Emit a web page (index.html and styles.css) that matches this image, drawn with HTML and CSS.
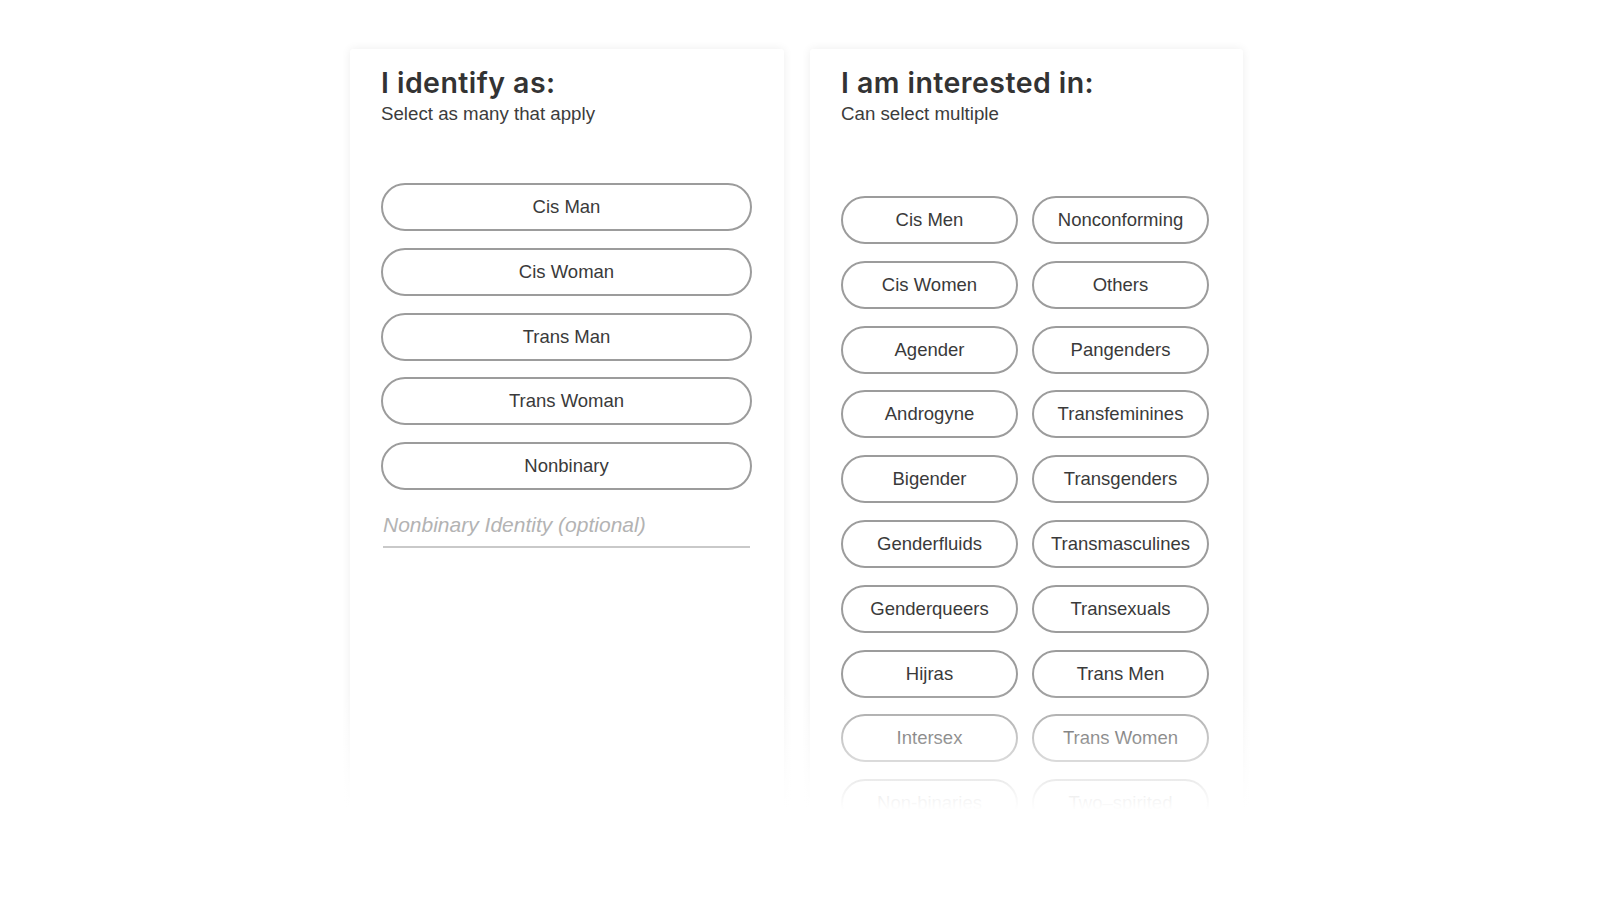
FILE: index.html
```html
<!DOCTYPE html>
<html lang="en">
<head>
<meta charset="utf-8">
<title>Identity preferences</title>
<link rel="stylesheet" href="styles.css">
</head>
<body>
<main class="stage">
  <section class="card card-identity">
    <h1 class="title">I identify as:</h1>
    <p class="subtitle">Select as many that apply</p>
    <div class="list">
      <button class="pill">Cis Man</button>
      <button class="pill">Cis Woman</button>
      <button class="pill">Trans Man</button>
      <button class="pill">Trans Woman</button>
      <button class="pill">Nonbinary</button>
    </div>
    <input class="field" type="text" placeholder="Nonbinary Identity (optional)">
  </section>
  <section class="card card-interest">
    <h1 class="title">I am interested in:</h1>
    <p class="subtitle">Can select multiple</p>
    <div class="grid">
      <button class="pill">Cis Men</button>
      <button class="pill">Nonconforming</button>
      <button class="pill">Cis Women</button>
      <button class="pill">Others</button>
      <button class="pill">Agender</button>
      <button class="pill">Pangenders</button>
      <button class="pill">Androgyne</button>
      <button class="pill">Transfeminines</button>
      <button class="pill">Bigender</button>
      <button class="pill">Transgenders</button>
      <button class="pill">Genderfluids</button>
      <button class="pill">Transmasculines</button>
      <button class="pill">Genderqueers</button>
      <button class="pill">Transexuals</button>
      <button class="pill">Hijras</button>
      <button class="pill">Trans Men</button>
      <button class="pill">Intersex</button>
      <button class="pill">Trans Women</button>
      <button class="pill">Non-binaries</button>
      <button class="pill">Two&ndash;spirited</button>
    </div>
  </section>
  <div class="fade"></div>
</main>
</body>
</html>
```

FILE: styles.css
```css
html, body {
  margin: 0;
  padding: 0;
  background: #ffffff;
}

body {
  font-family: "Liberation Sans", Arial, sans-serif;
  color: #333333;
}

.stage {
  position: relative;
  display: flex;
  align-items: flex-start;
  gap: 26px;
  padding: 49px 0 0 350px;
  height: 810px;
  box-sizing: border-box;
  overflow: hidden;
}

.card {
  width: 434px;
  min-height: 900px;
  box-sizing: border-box;
  background: #ffffff;
  border-radius: 3px;
  box-shadow: 0 0 10px rgba(0, 0, 0, 0.075);
  padding: 17px 32px 0 31px;
}

.card-interest {
  width: 433px;
  padding-right: 34px;
}

.title {
  margin: 0;
  font-family: Inter, "Noto Sans", sans-serif;
  font-weight: 600;
  font-size: 28.5px;
  line-height: 34px;
  letter-spacing: 0.45px;
  color: #333333;
}

.subtitle {
  margin: 3px 0 0;
  font-size: 18.7px;
  line-height: 22px;
  color: #3c3c3c;
}

.list {
  display: flex;
  flex-direction: column;
  gap: 16.8px;
  margin-top: 58px;
}

.grid {
  display: grid;
  grid-template-columns: 1fr 1fr;
  column-gap: 14px;
  row-gap: 16.8px;
  margin-top: 71px;
}

.pill {
  display: block;
  width: 100%;
  height: 48px;
  box-sizing: border-box;
  margin: 0;
  padding: 0 8px;
  border: 2px solid #9c9c9c;
  border-radius: 24px;
  background: #ffffff;
  font-family: "Liberation Sans", Arial, sans-serif;
  font-size: 18.5px;
  color: #3a3a3a;
  text-align: center;
  white-space: nowrap;
}

.field {
  display: block;
  width: calc(100% - 4px);
  margin: 19px 2px 0;
  height: 39px;
  box-sizing: border-box;
  padding: 0 0 5px;
  border: 0;
  border-bottom: 2px solid #c9c9c9;
  outline: none;
  background: transparent;
  font-family: "Liberation Sans", Arial, sans-serif;
  font-style: italic;
  font-size: 21px;
  line-height: 26px;
  color: #555555;
}

.field::placeholder {
  color: #b3b3b3;
}

.fade {
  position: absolute;
  left: 0;
  right: 0;
  bottom: 0;
  height: 122px;
  background: linear-gradient(to bottom, rgba(255, 255, 255, 0) 0%, rgba(255, 255, 255, 0.9) 85%, #ffffff 100%);
  pointer-events: none;
}
```
